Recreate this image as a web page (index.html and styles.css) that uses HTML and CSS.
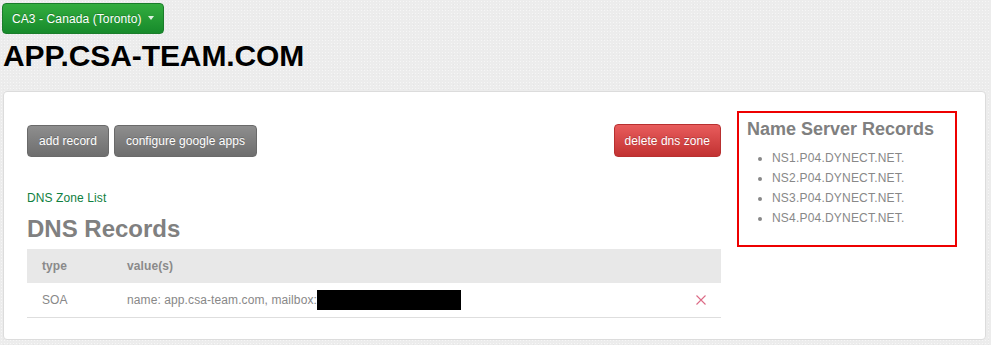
FILE: index.html
```html
<!DOCTYPE html>
<html>
<head>
<meta charset="utf-8">
<link rel="stylesheet" href="styles.css">
</head>
<body>
<div class="page">
  <button class="btn btn-green region">CA3 - Canada (Toronto) <span class="caret"></span></button>
  <h1 class="domain">APP.CSA-TEAM.COM</h1>
  <div class="card">
    <div class="main">
      <div class="toolbar">
        <div class="group">
          <button class="btn btn-grey">add record</button>
          <button class="btn btn-grey">configure google apps</button>
        </div>
        <button class="btn btn-red">delete dns zone</button>
      </div>
      <a class="zone-link" href="#">DNS Zone List</a>
      <h2 class="section-title">DNS Records</h2>
      <table class="records">
        <thead>
          <tr><th class="col-type">type</th><th>value(s)</th><th class="col-action"></th></tr>
        </thead>
        <tbody>
          <tr>
            <td class="col-type">SOA</td>
            <td>name: app.csa-team.com, mailbox:<span class="redact"></span></td>
            <td class="col-action"><svg class="x" width="10" height="10" viewBox="0 0 10 10"><path d="M0.5 0.5 L9.5 9.5 M9.5 0.5 L0.5 9.5" stroke="#dc6a86" stroke-width="1.1" fill="none"/></svg></td>
          </tr>
        </tbody>
      </table>
    </div>
    <div class="ns-box">
      <h3 class="ns-title">Name Server Records</h3>
      <ul class="ns-list">
        <li>NS1.P04.DYNECT.NET.</li>
        <li>NS2.P04.DYNECT.NET.</li>
        <li>NS3.P04.DYNECT.NET.</li>
        <li>NS4.P04.DYNECT.NET.</li>
      </ul>
    </div>
  </div>
</div>
</body>
</html>
```
FILE: styles.css
```css
html, body {
  margin: 0;
  padding: 0;
}
body {
  background-color: #ececec;
  background-image:
    radial-gradient(rgba(255,255,255,0.5) 0.6px, transparent 0.8px),
    radial-gradient(rgba(0,0,0,0.03) 0.6px, transparent 0.8px);
  background-size: 3px 3px, 5px 5px;
  background-position: 0 0, 1px 2px;
  font-family: "Liberation Sans", Arial, sans-serif;
  font-size: 12px;
  line-height: 20px;
  color: #888;
}
.page {
  padding: 3px 5px 0 2px;
  display: flex;
  flex-direction: column;
  align-items: flex-start;
}
.btn {
  font-family: "Liberation Sans", Arial, sans-serif;
  font-size: 12px;
  line-height: 16px;
  color: #fff;
  border-radius: 4px;
  padding: 7px 11px;
  border: 1px solid;
  cursor: pointer;
  letter-spacing: 0.05px;
  text-shadow: 0 -1px 0 rgba(0,0,0,0.2);
  display: inline-flex;
  align-items: center;
}
.btn-green {
  background: linear-gradient(#33ad3f, #178a2b);
  border-color: #1a7d2a;
}
.region {
  height: 31px;
  padding: 0 9px 0 9px;
  letter-spacing: 0.1px;
}
.caret {
  display: inline-block;
  width: 0;
  height: 0;
  margin-left: 6px;
  border-left: 3.5px solid transparent;
  border-right: 3.5px solid transparent;
  border-top: 4px solid rgba(255,255,255,0.85);
  margin-top: -1px;
}
.domain {
  margin: 4px 0 17px 1px;
  font-size: 30px;
  line-height: 36px;
  font-weight: bold;
  letter-spacing: -0.1px;
  color: #000;
}
.card {
  align-self: stretch;
  margin-left: 1px;
  background: #fff;
  border: 1px solid #dcdcdc;
  border-radius: 4px;
  padding: 19px 28px 21px 23px;
  display: flex;
  gap: 16px;
  align-items: flex-start;
}
.main {
  flex: 1;
  display: flex;
  flex-direction: column;
  align-items: flex-start;
}
.toolbar {
  align-self: stretch;
  margin-top: 14px;
  display: flex;
  justify-content: space-between;
}
.group {
  display: flex;
  gap: 5px;
}
.btn-grey {
  height: 32px;
  background: linear-gradient(#8e8e8e, #6e6e6e);
  border-color: #6a6a6a;
}
.btn-red {
  height: 33px;
  margin-top: -1px;
  padding: 7px 10px;
  background: linear-gradient(#e85c5c, #c23232);
  border-color: #b83030;
}
.zone-link {
  margin-top: 31px;
  color: #0f8040;
  text-decoration: none;
  letter-spacing: 0.1px;
}
.section-title {
  margin: 6px 0 5px;
  font-size: 24px;
  line-height: 30px;
  font-weight: bold;
  color: #808080;
}
.records {
  align-self: stretch;
  border-collapse: collapse;
  table-layout: fixed;
  letter-spacing: 0.1px;
}
.records th {
  background: #e8e8e8;
  height: 34px;
  padding: 0 15px;
  text-align: left;
  font-weight: bold;
  color: #8a8a8a;
}
.records td {
  height: 34px;
  padding: 0 15px;
  border-bottom: 1px solid #dedede;
  color: #888;
}
.records .col-type {
  width: 55px;
}
.records .col-action {
  text-align: right;
  width: 10px;
}
.redact {
  display: inline-block;
  width: 144px;
  height: 20px;
  background: #000;
  vertical-align: middle;
  margin-top: -2px;
}
.x {
  display: block;
  margin-left: auto;
}
.ns-box {
  width: 220px;
  box-sizing: border-box;
  border: 2px solid #ee0000;
  padding: 5px 8px 17px;
}
.ns-title {
  margin: 0;
  font-size: 18px;
  line-height: 22px;
  font-weight: bold;
  color: #808080;
}
.ns-list {
  margin: 8px 0 0;
  padding-left: 25px;
  color: #888;
  letter-spacing: 0.2px;
}
```
